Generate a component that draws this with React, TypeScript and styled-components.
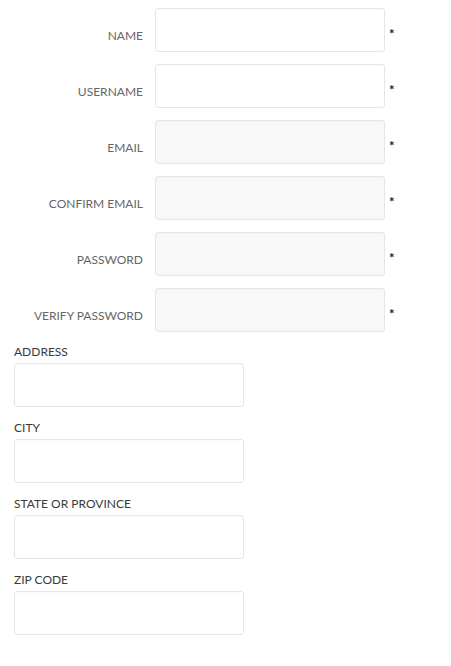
import React from "react";
import styled, { createGlobalStyle } from "styled-components";

const Global = createGlobalStyle`
  html, body { margin: 0; padding: 0; background: #fff; }
  body { font-family: Lato, "Open Sans", "Liberation Sans", sans-serif; }
`;

const Page = styled.div`
  padding: 8px 0 0 14px;
  width: 451px;
  box-sizing: border-box;
`;

const Row = styled.div`
  display: flex;
  align-items: flex-start;
  height: 44px;
  margin: 0 0 12px -14px;
`;

const SideLabel = styled.label`
  width: 143px;
  box-sizing: border-box;
  height: 44px;
  padding-top: 10px;
  display: flex;
  align-items: center;
  justify-content: flex-end;
  font-size: 12px;
  font-weight: 400;
  color: #666;
  text-transform: uppercase;
`;

const Input = styled.input<{ $disabled?: boolean }>`
  box-sizing: border-box;
  width: 230px;
  height: 44px;
  border: 1px solid #e6e6e6;
  border-radius: 3px;
  background: ${(p) => (p.$disabled ? "#f8f8f8" : "#fff")};
  box-shadow: inset 0 1px 1px rgba(0, 0, 0, 0.02);
  outline: none;
  display: block;
  padding: 0 8px;
  font: inherit;
`;

const SideInput = styled(Input)`
  margin-left: 12px;
`;

const Req = styled.span`
  margin-left: 4px;
  height: 44px;
  padding-top: 7px;
  box-sizing: border-box;
  display: flex;
  align-items: center;
  font-size: 13px;
  font-weight: 700;
  color: #222;
`;

const Field = styled.div`
  margin-bottom: 13px;
`;

const TopLabel = styled.label`
  display: block;
  font-size: 12px;
  font-weight: 400;
  line-height: 16px;
  color: #3a3a3a;
  margin-bottom: 3px;
`;

const top = [
  { label: "Name", disabled: false },
  { label: "Username", disabled: false },
  { label: "Email", disabled: true },
  { label: "Confirm Email", disabled: true },
  { label: "Password", disabled: true },
  { label: "Verify Password", disabled: true },
];

const bottom = ["ADDRESS", "CITY", "STATE OR PROVINCE", "ZIP CODE"];

export default function App() {
  return (
    <Page>
      <Global />
      {top.map((f) => (
        <Row key={f.label}>
          <SideLabel>{f.label}</SideLabel>
          <SideInput $disabled={f.disabled} readOnly={f.disabled} />
          <Req>*</Req>
        </Row>
      ))}
      {bottom.map((b) => (
        <Field key={b}>
          <TopLabel>{b}</TopLabel>
          <Input />
        </Field>
      ))}
    </Page>
  );
}
